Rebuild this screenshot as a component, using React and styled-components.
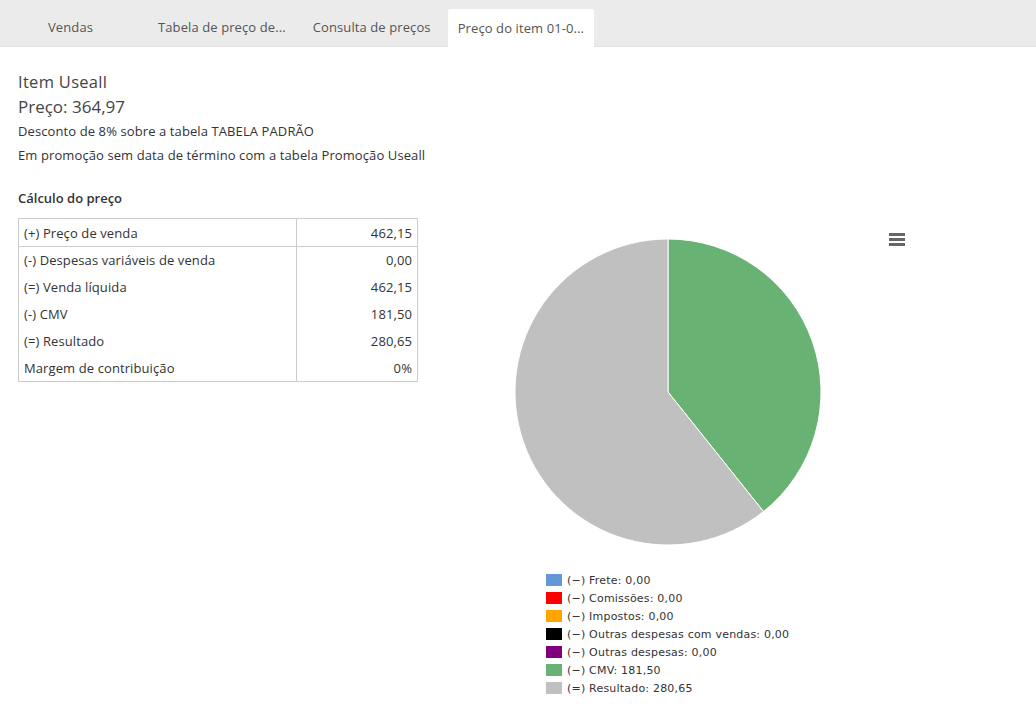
import styled, { createGlobalStyle } from "styled-components";

const GlobalStyle = createGlobalStyle`
  html, body {
    margin: 0;
    padding: 0;
    background: #ffffff;
    font-family: "Open Sans", "Noto Sans", sans-serif;
    color: #333333;
  }
`;

const TabBar = styled.div`
  display: flex;
  align-items: flex-end;
  gap: 7px;
  height: 47px;
  background: #ebebeb;
  border-bottom: 1px solid #e2e2e2;
  box-sizing: border-box;
`;

const Tab = styled.div`
  display: flex;
  align-items: center;
  justify-content: center;
  box-sizing: border-box;
  height: 38px;
  padding: 0 10px;
  min-width: ${(p) => (p.wide ? "141px" : "0")};
  font-size: 13px;
  letter-spacing: 0.1px;
  color: #555555;
  white-space: nowrap;
  border-radius: 2px 2px 0 0;
  background: ${(p) => (p.active ? "#ffffff" : "transparent")};
  margin-bottom: ${(p) => (p.active ? "-1px" : "0")};
`;

const Page = styled.div`
  padding: 22px 18px 0 18px;
`;

const Title = styled.div`
  font-size: 16.5px;
  line-height: 25px;
  color: #444444;
  letter-spacing: 0.3px;
`;

const Price = styled.div`
  font-size: 17px;
  line-height: 25px;
  color: #444444;
`;

const Info = styled.div`
  font-size: 13px;
  line-height: 24px;
  color: #333333;
  letter-spacing: 0.1px;
`;

const SectionTitle = styled.div`
  margin-top: 21px;
  font-size: 13px;
  font-weight: 600;
  line-height: 20px;
  color: #333333;
`;

const Body = styled.div`
  display: flex;
  align-items: flex-start;
  margin-top: 10px;
`;

const Table = styled.table`
  width: 400px;
  border-collapse: collapse;
  border: 1px solid #cccccc;
  font-size: 13px;
  letter-spacing: 0.1px;
  color: #333333;
  flex: none;
`;

const Row = styled.tr`
  height: ${(p) => (p.head ? "28px" : "27px")};
  border-bottom: ${(p) => (p.head ? "1px solid #cccccc" : "none")};
`;

const Label = styled.td`
  padding: 0 5px;
  border-right: 1px solid #cccccc;
  width: 267px;
`;

const Value = styled.td`
  padding: 0 5px;
  text-align: right;
`;

const ChartBox = styled.div`
  position: relative;
  width: 480px;
  margin-left: 12px;
  padding-top: 19px;
`;

const MenuButton = styled.div`
  position: absolute;
  top: 15px;
  right: 5px;
  display: flex;
  flex-direction: column;
  gap: 2px;
  width: 16px;
`;

const MenuBar = styled.span`
  display: block;
  height: 3px;
  background: #666666;
`;

const PieWrap = styled.div`
  display: flex;
  justify-content: center;
  margin-left: -4px;
`;

const Legend = styled.div`
  display: flex;
  flex-direction: column;
  margin-top: 24px;
  margin-left: 116px;
`;

const LegendItem = styled.div`
  display: flex;
  align-items: center;
  height: 18px;
  font-family: "DejaVu Sans", Verdana, sans-serif;
  font-size: 11px;
  letter-spacing: 0.2px;
  color: #333333;
`;

const Swatch = styled.span`
  width: 16px;
  height: 12px;
  margin-right: 5px;
  background: ${(p) => p.color};
`;

const rows = [
  ["(+) Preço de venda", "462,15"],
  ["(-) Despesas variáveis de venda", "0,00"],
  ["(=) Venda líquida", "462,15"],
  ["(-) CMV", "181,50"],
  ["(=) Resultado", "280,65"],
  ["Margem de contribuição", "0%"],
];

const legend = [
  ["#6597d7", "(−) Frete: 0,00"],
  ["#ff0000", "(−) Comissões: 0,00"],
  ["#ffa500", "(−) Impostos: 0,00"],
  ["#000000", "(−) Outras despesas com vendas: 0,00"],
  ["#800080", "(−) Outras despesas: 0,00"],
  ["#68b373", "(−) CMV: 181,50"],
  ["#c0c0c0", "(=) Resultado: 280,65"],
];

function Pie() {
  const r = 153;
  const c = 155;
  const cmv = 181.5;
  const res = 280.65;
  const a = (cmv / (cmv + res)) * Math.PI * 2;
  const x = c + r * Math.sin(a);
  const y = c - r * Math.cos(a);
  return (
    <svg width="310" height="310" viewBox="0 0 310 310">
      <path
        d={`M${c},${c} L${c},${c - r} A${r},${r} 0 0 1 ${x},${y} Z`}
        fill="#68b373"
        stroke="#ffffff"
        strokeWidth="1"
        strokeLinejoin="round"
      />
      <path
        d={`M${c},${c} L${x},${y} A${r},${r} 0 1 1 ${c},${c - r} Z`}
        fill="#c0c0c0"
        stroke="#ffffff"
        strokeWidth="1"
        strokeLinejoin="round"
      />
    </svg>
  );
}

export default function App() {
  return (
    <>
      <GlobalStyle />
      <TabBar>
        <Tab wide>Vendas</Tab>
        <Tab>Tabela de preço de...</Tab>
        <Tab>Consulta de preços</Tab>
        <Tab active>Preço do item 01-0...</Tab>
      </TabBar>
      <Page>
        <Title>Item Useall</Title>
        <Price>Preço: 364,97</Price>
        <Info>Desconto de 8% sobre a tabela TABELA PADRÃO</Info>
        <Info>Em promoção sem data de término com a tabela Promoção Useall</Info>
        <SectionTitle>Cálculo do preço</SectionTitle>
        <Body>
          <Table>
            <tbody>
              {rows.map(([l, v], i) => (
                <Row key={l} head={i === 0}>
                  <Label>{l}</Label>
                  <Value>{v}</Value>
                </Row>
              ))}
            </tbody>
          </Table>
          <ChartBox>
            <MenuButton>
              <MenuBar />
              <MenuBar />
              <MenuBar />
            </MenuButton>
            <PieWrap>
              <Pie />
            </PieWrap>
            <Legend>
              {legend.map(([color, text]) => (
                <LegendItem key={text}>
                  <Swatch color={color} />
                  {text}
                </LegendItem>
              ))}
            </Legend>
          </ChartBox>
        </Body>
      </Page>
    </>
  );
}
